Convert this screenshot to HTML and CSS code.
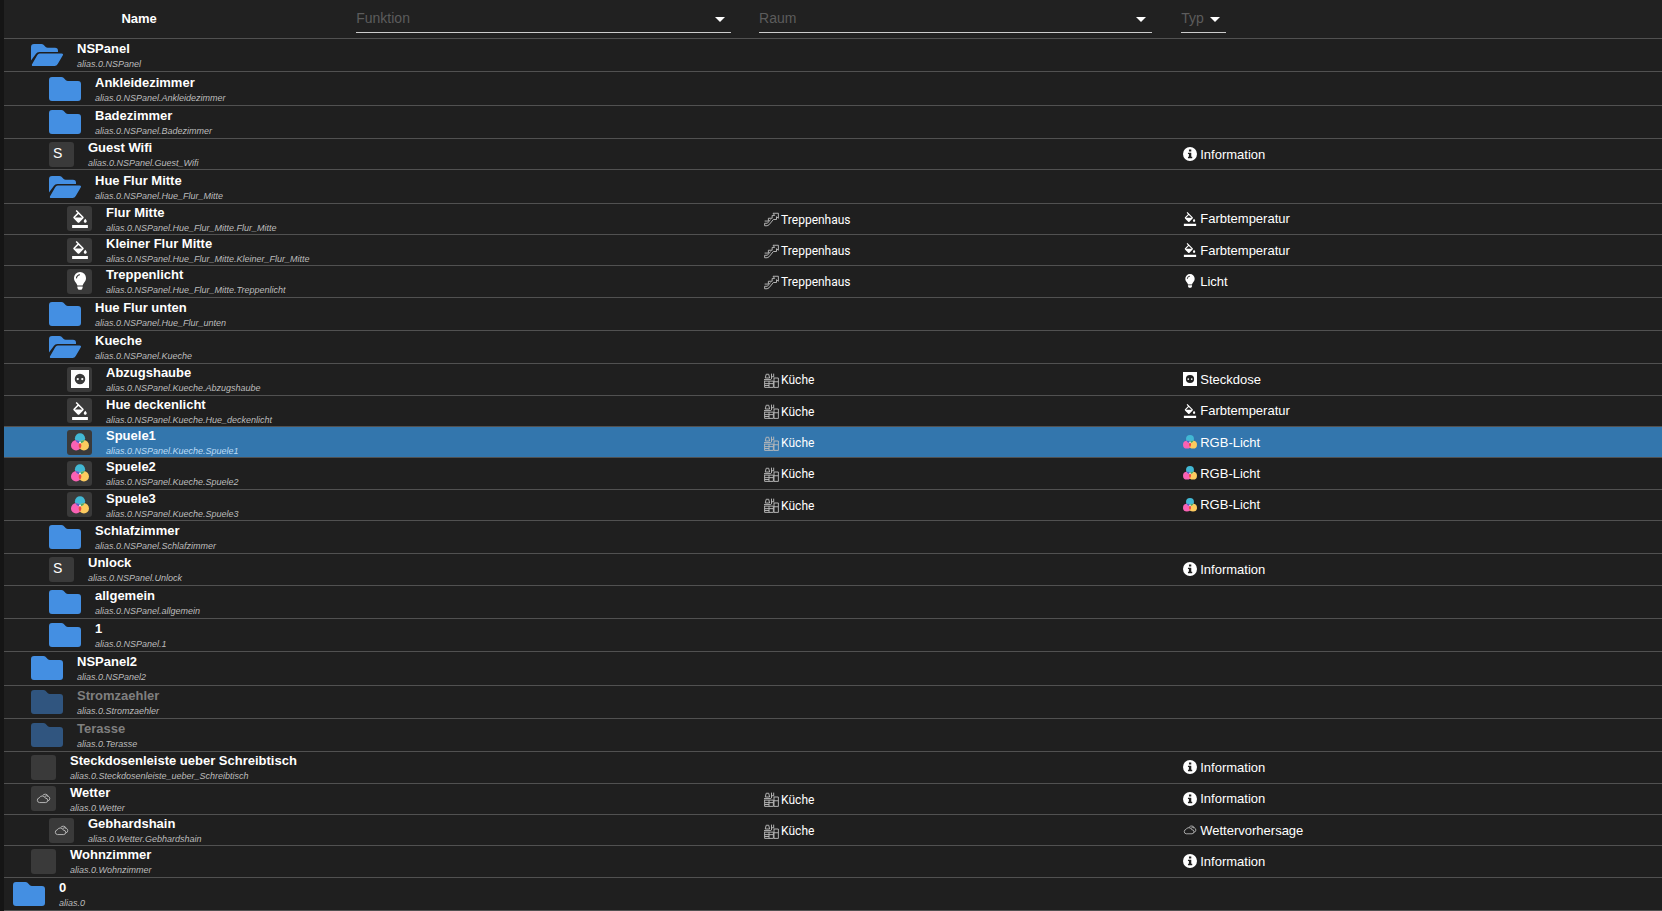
FILE: index.html
```html
<!DOCTYPE html>
<html lang="de">
<head>
    <meta charset="UTF-8">
    <meta name="viewport" content="width=device-width, initial-scale=1.0">
    <title>alias.0</title>
    <link rel="stylesheet" href="styles.css">
</head>
<body>
    <svg class="sprite" aria-hidden="true">
        <symbol id="folder" viewBox="0 0 32 24">
            <path d="M3 0h9.500q1.200 0 2 .8l2.400 2.400q.8.800 2 .8H29q3 0 3 3v14q0 3-3 3H3q-3 0-3-3V3q0-3 3-3z"/>
        </symbol>
        <symbol id="folder-open" viewBox="0 0 32 24">
            <path d="M0 17.500V4q0-3 3-3h7.500q1.200 0 2 .8l2.200 2.200q.8.700 2 .7H24q3 0 3 3V9H8.500Q6 9 4.800 11z"/>
            <path d="M8.700 10.500H30.500q2.200 0 1.200 2l-5 8.600Q25.700 23 23.500 23H2.200q-2 0-1-1.900l5-8.800q1-1.800 2.500-1.800z"/>
        </symbol>
        <symbol id="fill" viewBox="0 0 24 24">
            <path d="M16.560 8.940L7.620 0 6.210 1.410l2.380 2.380-5.150 5.150c-.59.59-.59 1.540 0 2.120l5.500 5.500c.29.29.68.44 1.060.44s.77-.15 1.060-.44l5.500-5.500c.59-.58.59-1.530 0-2.120zM5.210 10L10 5.210 14.790 10zM19 11.500s-2 2.170-2 3.500c0 1.100.9 2 2 2s2-.9 2-2c0-1.330-2-3.500-2-3.500zM1.500 20h21v4h-21z"/>
        </symbol>
        <symbol id="bulb" viewBox="0 0 24 24">
            <path d="M12 0a8 8 0 0 0-8 8.200c0 3.100 1.500 4.600 2.800 6.300C7.800 15.800 8.300 17 8.500 18h7c.2-1 .7-2.200 1.700-3.500C18.500 12.800 20 11.300 20 8.200A8 8 0 0 0 12 0zM8.500 19.200h7v2l-1.500 2.300h-4l-1.500-2.300z"/>
            <path class="shine" d="M7.300 8.500A4.700 4.700 0 0 1 12 3.700"/>
        </symbol>
        <symbol id="socket" viewBox="0 0 24 24">
            <path fill-rule="evenodd" d="M0 0h24v24H0zM12 5a7 7 0 1 0 0 14 7 7 0 0 0 0-14z"/>
            <circle cx="9" cy="12" r="1.500"/>
            <circle cx="15" cy="12" r="1.500"/>
        </symbol>
        <symbol id="rgb" viewBox="0 0 24 24">
            <circle cx="12" cy="7" r="6.800" fill="#42b8d4"/>
            <circle cx="6.800" cy="16.500" r="6.800" fill="#fa62b4"/>
            <circle cx="17.200" cy="16.500" r="6.800" fill="#fdcb5f"/>
            <path fill="#ef4444" d="M12 12.200a6.800 6.800 0 0 1 0 8.700 6.800 6.800 0 0 1 0-8.700z"/>
            <path fill="#4b62c8" d="M5.900 9.800a6.800 6.800 0 0 1 6.100 2.400 6.800 6.800 0 0 1-1.200 1.500 6.800 6.800 0 0 1-4.900-3.900z"/>
            <path fill="#42a66a" d="M18.100 9.800a6.800 6.800 0 0 0-6.100 2.400 6.800 6.800 0 0 0 1.200 1.500 6.800 6.800 0 0 0 4.900-3.900z"/>
            <circle cx="12" cy="12.800" r="1.200" fill="#fff"/>
        </symbol>
        <symbol id="info" viewBox="0 0 24 24">
            <path fill-rule="evenodd" d="M12 0a12 12 0 1 0 0 24 12 12 0 0 0 0-24zM10.200 4.200h4v3.600h-4zM8.500 9.800h5.700v7h1.600v2.400H8.500v-2.400h1.600v-4.600H8.500z"/>
        </symbol>
        <symbol id="cloud" viewBox="0 0 24 24">
            <path class="line" d="M5.500 18.500a3.800 3.800 0 0 1-.3-7.500A5.300 5.300 0 0 1 15 11.500a3.500 3.500 0 0 1 .5 7zM10.500 7.500A5 5 0 0 1 19.500 8.500a3.800 3.800 0 0 1-.5 7.300M14 9a3.500 3.500 0 0 1 5-.5"/>
        </symbol>
        <symbol id="stairs" viewBox="0 0 24 24">
            <path class="line" d="M1 14.500h6V10h6V5.500h4L14.500 2H23v8l-3-2.500V12h-5l-7 8.500L5 22H1v-4h4.500l5-6"/>
        </symbol>
        <symbol id="kitchen" viewBox="0 0 24 24">
            <path class="line" d="M0 13h15M1 13v10h14V13M1 17h14M8 13v10M1 20h7M16 8h7v15h-7zM16 14h7M2 8h7L7.500 2h-4zM0 10.500h11M12 1v9M15.500 1v6M12 6h3"/>
        </symbol>
    </svg>

    <table class="devices">
        <colgroup>
            <col class="col-name">
            <col class="col-function">
            <col class="col-room">
            <col class="col-type">
        </colgroup>
        <thead>
            <tr>
                <th class="head-name">Name</th>
                <th>
                    <div class="filter">
                        <select aria-label="Funktion"><option>Funktion</option></select>
                    </div>
                </th>
                <th>
                    <div class="filter">
                        <select aria-label="Raum"><option>Raum</option></select>
                    </div>
                </th>
                <th>
                    <div class="filter short">
                        <select aria-label="Typ"><option>Typ</option></select>
                    </div>
                </th>
            </tr>
        </thead>
        <tbody>
            <tr>
                <td><div class="node level-1"><svg class="folder"><use href="#folder-open"/></svg><div class="label"><b class="name">NSPanel</b><i class="id">alias.0.NSPanel</i></div></div></td>
                <td></td><td></td><td></td>
            </tr>
            <tr>
                <td><div class="node level-2"><svg class="folder"><use href="#folder"/></svg><div class="label"><b class="name">Ankleidezimmer</b><i class="id">alias.0.NSPanel.Ankleidezimmer</i></div></div></td>
                <td></td><td></td><td></td>
            </tr>
            <tr>
                <td><div class="node level-2"><svg class="folder"><use href="#folder"/></svg><div class="label"><b class="name">Badezimmer</b><i class="id">alias.0.NSPanel.Badezimmer</i></div></div></td>
                <td></td><td></td><td></td>
            </tr>
            <tr>
                <td><div class="node level-2"><span class="tile letter">S</span><div class="label"><b class="name">Guest Wifi</b><i class="id">alias.0.NSPanel.Guest_Wifi</i></div></div></td>
                <td></td><td></td>
                <td><div class="type"><svg><use href="#info"/></svg>Information</div></td>
            </tr>
            <tr>
                <td><div class="node level-2"><svg class="folder"><use href="#folder-open"/></svg><div class="label"><b class="name">Hue Flur Mitte</b><i class="id">alias.0.NSPanel.Hue_Flur_Mitte</i></div></div></td>
                <td></td><td></td><td></td>
            </tr>
            <tr>
                <td><div class="node level-3"><span class="tile"><svg><use href="#fill"/></svg></span><div class="label"><b class="name">Flur Mitte</b><i class="id">alias.0.NSPanel.Hue_Flur_Mitte.Flur_Mitte</i></div></div></td>
                <td></td>
                <td><div class="room"><svg><use href="#stairs"/></svg>Treppenhaus</div></td>
                <td><div class="type"><svg><use href="#fill"/></svg>Farbtemperatur</div></td>
            </tr>
            <tr>
                <td><div class="node level-3"><span class="tile"><svg><use href="#fill"/></svg></span><div class="label"><b class="name">Kleiner Flur Mitte</b><i class="id">alias.0.NSPanel.Hue_Flur_Mitte.Kleiner_Flur_Mitte</i></div></div></td>
                <td></td>
                <td><div class="room"><svg><use href="#stairs"/></svg>Treppenhaus</div></td>
                <td><div class="type"><svg><use href="#fill"/></svg>Farbtemperatur</div></td>
            </tr>
            <tr>
                <td><div class="node level-3"><span class="tile"><svg><use href="#bulb"/></svg></span><div class="label"><b class="name">Treppenlicht</b><i class="id">alias.0.NSPanel.Hue_Flur_Mitte.Treppenlicht</i></div></div></td>
                <td></td>
                <td><div class="room"><svg><use href="#stairs"/></svg>Treppenhaus</div></td>
                <td><div class="type"><svg><use href="#bulb"/></svg>Licht</div></td>
            </tr>
            <tr>
                <td><div class="node level-2"><svg class="folder"><use href="#folder"/></svg><div class="label"><b class="name">Hue Flur unten</b><i class="id">alias.0.NSPanel.Hue_Flur_unten</i></div></div></td>
                <td></td><td></td><td></td>
            </tr>
            <tr>
                <td><div class="node level-2"><svg class="folder"><use href="#folder-open"/></svg><div class="label"><b class="name">Kueche</b><i class="id">alias.0.NSPanel.Kueche</i></div></div></td>
                <td></td><td></td><td></td>
            </tr>
            <tr>
                <td><div class="node level-3"><span class="tile"><svg><use href="#socket"/></svg></span><div class="label"><b class="name">Abzugshaube</b><i class="id">alias.0.NSPanel.Kueche.Abzugshaube</i></div></div></td>
                <td></td>
                <td><div class="room"><svg><use href="#kitchen"/></svg>Küche</div></td>
                <td><div class="type"><svg><use href="#socket"/></svg>Steckdose</div></td>
            </tr>
            <tr>
                <td><div class="node level-3"><span class="tile"><svg><use href="#fill"/></svg></span><div class="label"><b class="name">Hue deckenlicht</b><i class="id">alias.0.NSPanel.Kueche.Hue_deckenlicht</i></div></div></td>
                <td></td>
                <td><div class="room"><svg><use href="#kitchen"/></svg>Küche</div></td>
                <td><div class="type"><svg><use href="#fill"/></svg>Farbtemperatur</div></td>
            </tr>
            <tr class="selected">
                <td><div class="node level-3"><span class="tile"><svg><use href="#rgb"/></svg></span><div class="label"><b class="name">Spuele1</b><i class="id">alias.0.NSPanel.Kueche.Spuele1</i></div></div></td>
                <td></td>
                <td><div class="room"><svg><use href="#kitchen"/></svg>Küche</div></td>
                <td><div class="type"><svg><use href="#rgb"/></svg>RGB-Licht</div></td>
            </tr>
            <tr>
                <td><div class="node level-3"><span class="tile"><svg><use href="#rgb"/></svg></span><div class="label"><b class="name">Spuele2</b><i class="id">alias.0.NSPanel.Kueche.Spuele2</i></div></div></td>
                <td></td>
                <td><div class="room"><svg><use href="#kitchen"/></svg>Küche</div></td>
                <td><div class="type"><svg><use href="#rgb"/></svg>RGB-Licht</div></td>
            </tr>
            <tr>
                <td><div class="node level-3"><span class="tile"><svg><use href="#rgb"/></svg></span><div class="label"><b class="name">Spuele3</b><i class="id">alias.0.NSPanel.Kueche.Spuele3</i></div></div></td>
                <td></td>
                <td><div class="room"><svg><use href="#kitchen"/></svg>Küche</div></td>
                <td><div class="type"><svg><use href="#rgb"/></svg>RGB-Licht</div></td>
            </tr>
            <tr>
                <td><div class="node level-2"><svg class="folder"><use href="#folder"/></svg><div class="label"><b class="name">Schlafzimmer</b><i class="id">alias.0.NSPanel.Schlafzimmer</i></div></div></td>
                <td></td><td></td><td></td>
            </tr>
            <tr>
                <td><div class="node level-2"><span class="tile letter">S</span><div class="label"><b class="name">Unlock</b><i class="id">alias.0.NSPanel.Unlock</i></div></div></td>
                <td></td><td></td>
                <td><div class="type"><svg><use href="#info"/></svg>Information</div></td>
            </tr>
            <tr>
                <td><div class="node level-2"><svg class="folder"><use href="#folder"/></svg><div class="label"><b class="name">allgemein</b><i class="id">alias.0.NSPanel.allgemein</i></div></div></td>
                <td></td><td></td><td></td>
            </tr>
            <tr>
                <td><div class="node level-2"><svg class="folder"><use href="#folder"/></svg><div class="label"><b class="name">1</b><i class="id">alias.0.NSPanel.1</i></div></div></td>
                <td></td><td></td><td></td>
            </tr>
            <tr>
                <td><div class="node level-1"><svg class="folder"><use href="#folder"/></svg><div class="label"><b class="name">NSPanel2</b><i class="id">alias.0.NSPanel2</i></div></div></td>
                <td></td><td></td><td></td>
            </tr>
            <tr class="empty">
                <td><div class="node level-1"><svg class="folder"><use href="#folder"/></svg><div class="label"><b class="name">Stromzaehler</b><i class="id">alias.0.Stromzaehler</i></div></div></td>
                <td></td><td></td><td></td>
            </tr>
            <tr class="empty">
                <td><div class="node level-1"><svg class="folder"><use href="#folder"/></svg><div class="label"><b class="name">Terasse</b><i class="id">alias.0.Terasse</i></div></div></td>
                <td></td><td></td><td></td>
            </tr>
            <tr>
                <td><div class="node level-1"><span class="tile"></span><div class="label"><b class="name">Steckdosenleiste ueber Schreibtisch</b><i class="id">alias.0.Steckdosenleiste_ueber_Schreibtisch</i></div></div></td>
                <td></td><td></td>
                <td><div class="type"><svg><use href="#info"/></svg>Information</div></td>
            </tr>
            <tr>
                <td><div class="node level-1"><span class="tile thin"><svg><use href="#cloud"/></svg></span><div class="label"><b class="name">Wetter</b><i class="id">alias.0.Wetter</i></div></div></td>
                <td></td>
                <td><div class="room"><svg><use href="#kitchen"/></svg>Küche</div></td>
                <td><div class="type"><svg><use href="#info"/></svg>Information</div></td>
            </tr>
            <tr>
                <td><div class="node level-2"><span class="tile thin"><svg><use href="#cloud"/></svg></span><div class="label"><b class="name">Gebhardshain</b><i class="id">alias.0.Wetter.Gebhardshain</i></div></div></td>
                <td></td>
                <td><div class="room"><svg><use href="#kitchen"/></svg>Küche</div></td>
                <td><div class="type"><svg><use href="#cloud"/></svg>Wettervorhersage</div></td>
            </tr>
            <tr>
                <td><div class="node level-1"><span class="tile"></span><div class="label"><b class="name">Wohnzimmer</b><i class="id">alias.0.Wohnzimmer</i></div></div></td>
                <td></td><td></td>
                <td><div class="type"><svg><use href="#info"/></svg>Information</div></td>
            </tr>
            <tr>
                <td><div class="node level-0"><svg class="folder"><use href="#folder"/></svg><div class="label"><b class="name">0</b><i class="id">alias.0</i></div></div></td>
                <td></td><td></td><td></td>
            </tr>
        </tbody>
    </table>
</body>
</html>
```
FILE: styles.css
```css
body {
    margin: 0;
    background-color: #1f1f1f;
    border-left: 4px solid #151515;
    color: #fff;
    font-family: "Liberation Sans", Arial, sans-serif;
    font-size: 13px;
}

.sprite {
    display: none;
}

svg {
    display: block;
    flex: none;
    fill: currentColor;
}

.line {
    fill: none;
    stroke: #bbb;
    stroke-width: 1.5;
}

.shine {
    fill: none;
    stroke: #333;
    stroke-width: 1.5;
}

/* rows share the height that is left in the window */
.devices {
    width: 100%;
    height: 100vh;
    table-layout: fixed;
    border-collapse: separate;
    border-spacing: 0;
}

.col-name {
    width: 20.4%;
}

.col-function {
    width: 24.3%;
}

.col-room {
    width: 25.4%;
}

.devices th, .devices td {
    padding: 0 14px;
    border-bottom: 1px solid #515151;
    vertical-align: middle;
}

.devices td:first-child {
    padding: 0;
}

.devices th:last-child, .devices td:last-child {
    padding-left: 15px;
}

.devices th {
    box-sizing: border-box;
    height: 39px;
    background-color: #212121;
}

.devices .head-name {
    padding: 0 68px 2px 0;
}

/* header filters */
.filter {
    position: relative;
    margin-bottom: 2px;
    border-bottom: 1px solid #ccc;
}

.filter.short {
    width: 45px;
}

.filter select {
    display: block;
    appearance: none;
    width: 100%;
    height: 28px;
    padding: 0;
    border: 0;
    outline: 0;
    background: none;
    color: #5c5c5c;
    font-family: inherit;
    font-size: 14px;
}

.filter::after {
    content: "";
    position: absolute;
    right: 6px;
    top: 13px;
    border: 5px solid transparent;
    border-top-color: #fff;
    border-bottom: 0;
    pointer-events: none;
}

/* tree */
.node {
    display: flex;
    align-items: center;
    gap: 14px;
    white-space: nowrap;
}

.level-0 { padding-left: 9px; }
.level-1 { padding-left: 27px; }
.level-2 { padding-left: 45px; }
.level-3 { padding-left: 63px; }

.folder {
    width: 32px;
    height: 24px;
    margin: 4px 0;
    color: #448fe2;
}

.tile {
    display: flex;
    flex: none;
    align-items: center;
    justify-content: center;
    width: 25px;
    height: 25px;
    border-radius: 3px;
    background-color: #3a3a3a;
}

.tile svg {
    width: 18px;
    height: 18px;
}

.tile.thin svg {
    width: 15px;
    height: 15px;
}

.tile.letter {
    justify-content: flex-start;
    box-sizing: border-box;
    padding: 0 0 3px 4px;
    font-size: 14px;
}

.label {
    height: 29px;
    padding-top: 1px;
}

.name, .id {
    display: block;
}

.name {
    line-height: 16px;
}

.id {
    color: #bcbcbc;
    font-size: 9px;
    line-height: 15px;
}

.room, .type {
    display: flex;
    align-items: center;
}

.room {
    gap: 2px;
    padding: 2px 0 0 5px;
    font-family: Roboto, sans-serif;
    font-size: 12px;
}

.room svg {
    width: 15px;
    height: 15px;
}

.type {
    gap: 3px;
    padding-left: 2px;
}

.type svg {
    width: 14px;
    height: 14px;
}

.selected {
    background-color: #3376ad;
}

.selected .id {
    color: #bcdcf5;
}

.empty .folder {
    color: #30557f;
}

.empty .name {
    color: #7f7f7f;
}
```
